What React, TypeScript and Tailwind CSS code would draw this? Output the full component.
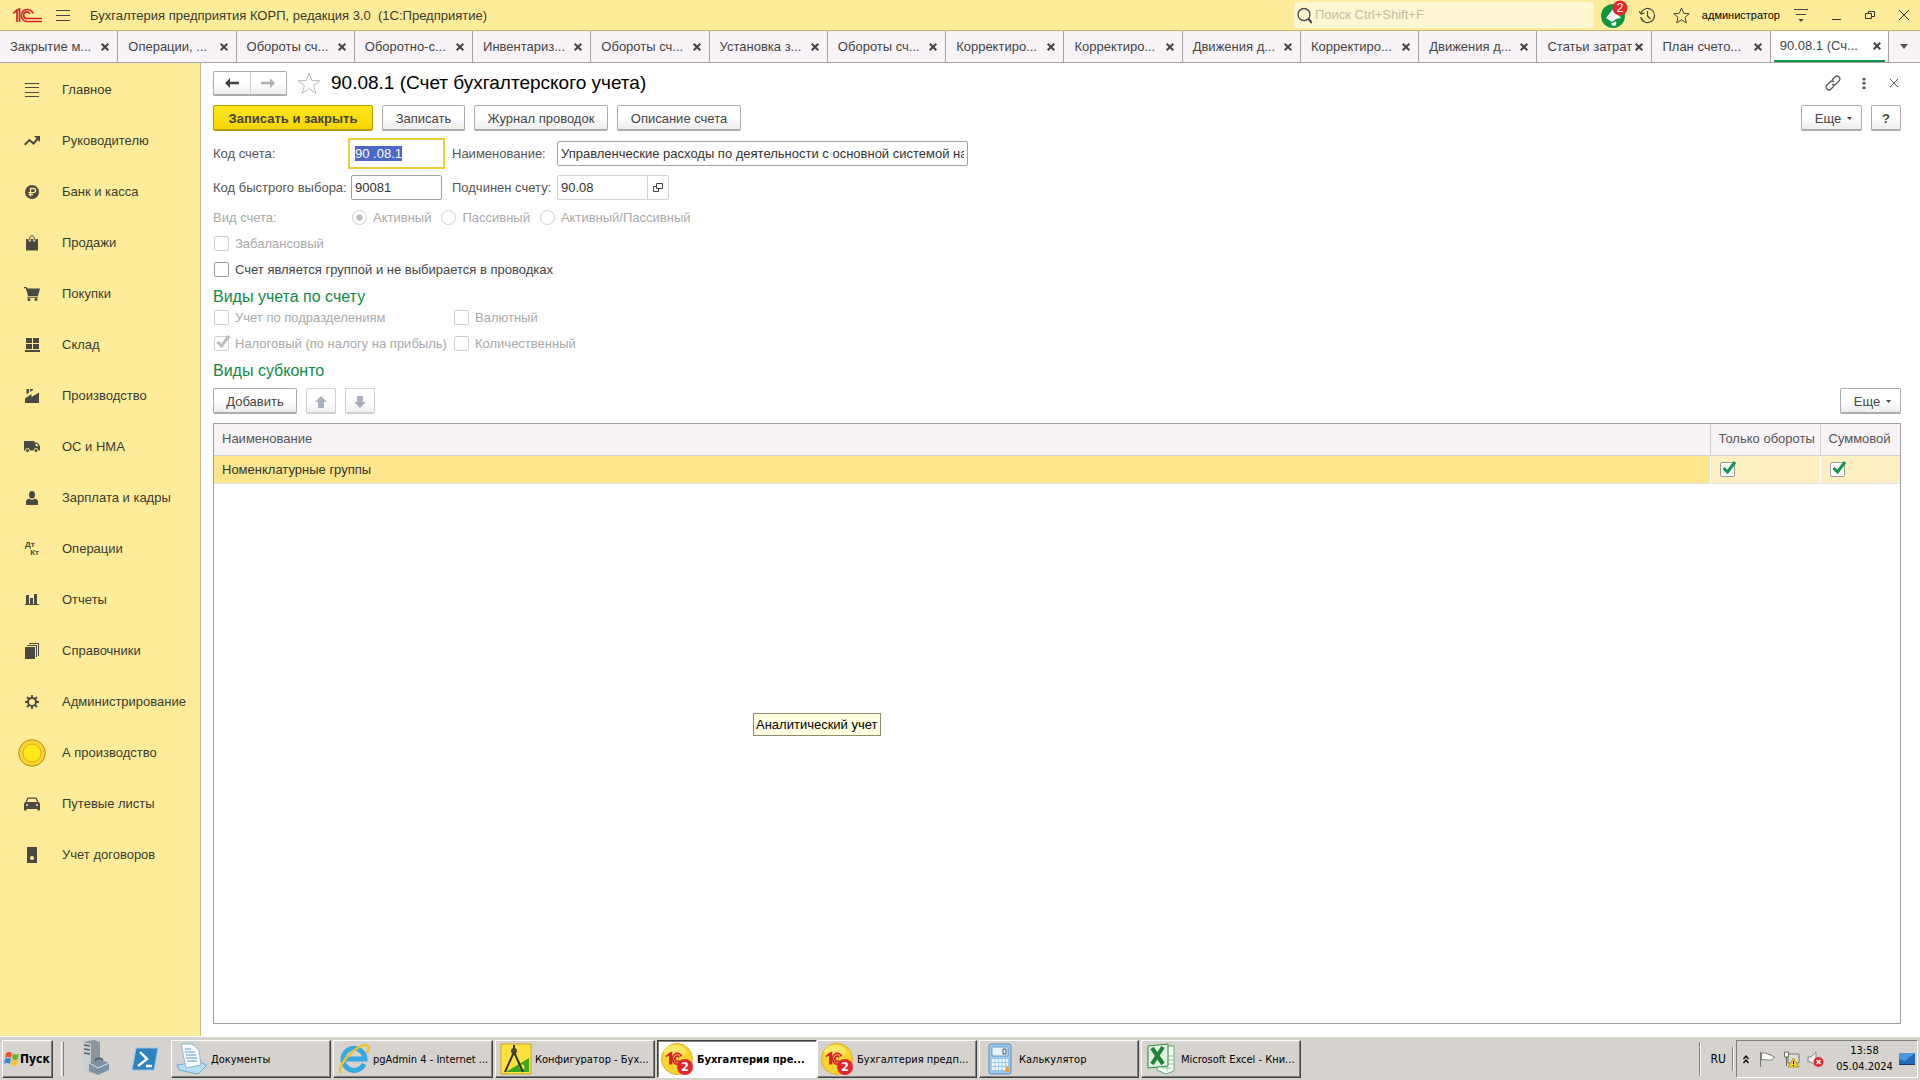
import { useEffect, useRef, type ReactNode } from "react"

const tabs = [
	"Закрытие м...",
	"Операции, ...",
	"Обороты сч...",
	"Оборотно-с...",
	"Инвентариз...",
	"Обороты сч...",
	"Установка з...",
	"Обороты сч...",
	"Корректиро...",
	"Корректиро...",
	"Движения д...",
	"Корректиро...",
	"Движения д...",
	"Статьи затрат",
	"План счето...",
	"90.08.1 (Сч...",
]

const sections: { label: string; icon: ReactNode }[] = [
	{
		label: "Главное",
		icon: (
			<svg width="14" height="14" stroke="currentColor">
				<path d="M0 .5h14M0 4.5h14M0 9.5h14M0 13.5h14" />
			</svg>
		),
	},
	{
		label: "Руководителю",
		icon: (
			<svg width="16" height="10" fill="none" stroke="currentColor" strokeWidth="2">
				<path d="M.7 8.8 5.5 4l4 3.5L14 2.5" />
				<path d="M10 0h6v6z" fill="currentColor" stroke="none" />
			</svg>
		),
	},
	{
		label: "Банк и касса",
		icon: (
			<svg width="14" height="14">
				<circle cx="7" cy="7" r="7" fill="currentColor" />
				<path d="M5.5 11.5v-8h3a2 2 0 0 1 0 4.2h-5M3.5 9.7h4.5" fill="none" stroke="#ffec9a" strokeWidth="1.3" />
			</svg>
		),
	},
	{
		label: "Продажи",
		icon: (
			<svg width="12" height="16">
				<path d="M0 4h12v11.5H0z" fill="currentColor" />
				<path d="M3.8 6.5V3.2a2.2 2.4 0 0 1 4.4 0v3.3" fill="none" stroke="#ffec9a" strokeWidth="2.4" />
				<path d="M3.8 5.5V3a2.2 2.3 0 0 1 4.4 0v2.5" fill="none" stroke="currentColor" strokeWidth="1" />
			</svg>
		),
	},
	{
		label: "Покупки",
		icon: (
			<svg width="16" height="14" fill="currentColor">
				<path d="M0 0h2.500l1 1.500H16L14 9H4L1.800 1.200H0zM3.500 9.800H14v1H3z" />
				<circle cx="5" cy="12.400" r="1.500" />
				<circle cx="12" cy="12.400" r="1.500" />
			</svg>
		),
	},
	{
		label: "Склад",
		icon: (
			<svg width="15" height="14" fill="currentColor">
				<path d="M1 0h6v5H1zM8 0h6v5H8zM1 6h6v5H1zM8 6h6v5H8zM0 12h15v2H0z" />
			</svg>
		),
	},
	{
		label: "Производство",
		icon: (
			<svg width="14" height="14" fill="currentColor">
				<path d="M0 14V9.500L6.500 5v3L14 3.500V14zM1.500 0H4v3.500L1.500 5.500zM5 0h3v1L5 3z" />
			</svg>
		),
	},
	{
		label: "ОС и НМА",
		icon: (
			<svg width="16" height="12">
				<path d="M0 0h10.500v1.500h3L16 5v4.500H0z" fill="currentColor" />
				<path d="M11.500 2.800h1.600l1.500 2.400h-3.100z" fill="#ffec9a" />
				<g fill="currentColor" stroke="#ffec9a">
					<circle cx="3.500" cy="9.500" r="2" />
					<circle cx="12" cy="9.500" r="2" />
				</g>
			</svg>
		),
	},
	{
		label: "Зарплата и кадры",
		icon: (
			<svg width="12" height="14" fill="currentColor">
				<ellipse cx="6" cy="3.700" rx="3" ry="3.700" />
				<path d="M0 14v-3q0-3 3.500-3.200Q6 9.500 8.500 7.800 12 8 12 11v3z" />
			</svg>
		),
	},
	{
		label: "Операции",
		icon: (
			<span className="flex w-[14px] flex-col text-[8px] leading-[8px] font-bold">
				<span>Дт</span>
				<span className="self-end">Кт</span>
			</span>
		),
	},
	{
		label: "Отчеты",
		icon: (
			<svg width="14" height="11" fill="currentColor">
				<path d="M1 1h3v9H1zM5 4h3v6H5zM9 0h3v10H9zM0 10h14v1H0z" />
			</svg>
		),
	},
	{
		label: "Справочники",
		icon: (
			<svg width="14" height="16" fill="currentColor">
				<path d="M0 4h10v12H0zM2 2h10v12h-1V3H2zM4 0h10v13h-1V1H4z" />
			</svg>
		),
	},
	{
		label: "Администрирование",
		icon: (
			<svg width="14" height="14" viewBox="0 0 14 14" fill="none" stroke="currentColor">
				<circle cx="7" cy="7" r="4" strokeWidth="2" />
				<path d="M7 0v2.500M7 11.500V14M0 7h2.500M11.500 7H14M2 2l2 2M10 10l2 2M2 12l2-2M10 4l2-2" strokeWidth="1.800" />
			</svg>
		),
	},
	{
		label: "А производство",
		icon: (
			<svg width="28" height="28">
				<circle cx="14" cy="14" r="13.300" fill="#fcd22e" stroke="#b38f13" />
				<circle cx="14" cy="14" r="9" fill="#ffe719" stroke="#e0a92c" />
			</svg>
		),
	},
	{
		label: "Путевые листы",
		icon: (
			<svg width="16" height="14">
				<path d="M0 6.500 1.500 5 3.500.500h9L14.500 5 16 6.500V13.500h-2.500V12h-11v1.500H0z" fill="currentColor" />
				<path d="M4.300 1.800h7.400L13.200 5H2.800z" fill="#ffec9a" />
				<circle cx="3" cy="8" r="1" fill="#ffec9a" />
				<circle cx="13" cy="8" r="1" fill="#ffec9a" />
			</svg>
		),
	},
	{
		label: "Учет договоров",
		icon: (
			<svg width="10" height="16">
				<path d="M0 0h10v16H0z" fill="currentColor" />
				<circle cx="5" cy="11" r="2" fill="#ffec9a" />
			</svg>
		),
	},
]

function LogoPaths() {
	return (
		<g fill="none" stroke="#d8232a" strokeWidth="1.700">
			<path d="M0 5.200 4 2.500V14M2.500 2.800 6.500 1v13" />
			<path d="M20 5.500A6 6 0 1 0 14.500 13.500H29" />
			<path d="M17 6A3.300 3.300 0 1 0 14.500 10.500H29" />
		</g>
	)
}

function OneCTaskIcon() {
	return (
		<svg width="33" height="33" viewBox="0 0 33 33" className="shrink-0">
			<circle cx="16" cy="16" r="15.500" fill="#f9d62c" stroke="#e0ae22" />
			<ellipse cx="14" cy="9" rx="11" ry="7" fill="#fff07a" opacity=".7" />
			<g transform="translate(5 9) scale(.78 .9)">
				<g fill="none" stroke="#d8232a" strokeWidth="2.200">
					<path d="M0 5 5 2V14M3 3l4-2v13" />
					<path d="M20 5A6 6 0 1 0 15 13.500h10M17 6a3 3 0 1 0-2 4.500h10" />
				</g>
			</g>
			<circle cx="24" cy="24" r="8" fill="#e5252b" />
			<text x="24" y="28" textAnchor="middle" fontSize="12" fontWeight="bold" fill="#fff">2</text>
		</svg>
	)
}

function Button({ children, className = "", ...rest }: { children: ReactNode; className?: string; disabled?: boolean; "aria-label"?: string }) {
	return (
		<button
			type="button"
			className={"flex h-[26px] shrink-0 items-center justify-center rounded-xs border border-b-2 pt-[2px] " + className}
			{...rest}
		>
			{children}
		</button>
	)
}

const plain = "border-[#acacac] bg-linear-to-b from-white from-50% to-[#ececec] text-[#444]"
const faded = "border-[#d0d0d0] bg-linear-to-b from-white from-50% to-[#f0f0f0] text-[#aab0be]"

function Caret() {
	return (
		<svg width="5" height="3" fill="currentColor">
			<path d="M0 0h5L2.500 3z" />
		</svg>
	)
}

function Check({ label, checked = false, disabled = false }: { label: string; checked?: boolean; disabled?: boolean }) {
	return (
		<label className={"flex h-[17px] items-center gap-[6px] pl-px whitespace-nowrap " + (disabled ? "text-[#a9a9a9]" : "text-[#444]")}>
			<Box checked={checked} disabled={disabled} />
			{label}
		</label>
	)
}

function Box({ checked, disabled, label }: { checked?: boolean; disabled?: boolean; label?: string }) {
	return (
		<span className="relative flex size-[15px] shrink-0">
			<input
				type="checkbox"
				aria-label={label}
				defaultChecked={checked}
				disabled={disabled}
				className="peer size-[15px] appearance-none rounded-xs border border-[#9a9a9a] bg-white disabled:border-[#cfcfcf]"
			/>
			<svg
				width="16"
				height="16"
				fill="none"
				strokeWidth="3"
				className="pointer-events-none absolute -top-px left-0 hidden stroke-[#0f9550] peer-checked:block peer-disabled:stroke-[#bdbdbd]"
			>
				<path d="m3.500 7 4 4L15 1" />
			</svg>
		</span>
	)
}

function Radio({ label, checked = false }: { label: string; checked?: boolean }) {
	return (
		<label className="flex items-center gap-[6px]">
			<input
				type="radio"
				name="kind"
				disabled
				defaultChecked={checked}
				className="size-[15px] appearance-none rounded-full border border-[#cfcfcf] bg-white checked:bg-radial checked:from-[#bdbdbd] checked:from-30% checked:to-white checked:to-40%"
			/>
			{label}
		</label>
	)
}

const raised = "border border-t-white border-l-white border-r-[#404040] border-b-[#404040] shadow-[inset_-1px_-1px_0_#808080]"

function Task({ title, icon, active = false }: { title: string; icon: ReactNode; active?: boolean }) {
	return (
		<button
			type="button"
			className={
				"flex h-[38px] w-[160px] items-center gap-[3px] pl-[3px] text-left " +
				(active
					? "border border-t-[#404040] border-l-[#404040] border-r-white border-b-white bg-white font-bold shadow-[inset_1px_1px_0_#808080]"
					: raised)
			}
		>
			<span className="flex w-[33px] shrink-0 justify-center">{icon}</span>
			<span className="pt-[2px] whitespace-nowrap">{title}</span>
		</button>
	)
}

function TitleBar() {
	return (
		<header className="flex h-[31px] items-center border-b border-[#c4b470] bg-[#ffec9a] text-[#3a3a30]">
			<svg width="30" height="15" className="ml-[13px] shrink-0">
				<LogoPaths />
			</svg>
			<button type="button" aria-label="Меню" className="ml-[13px]">
				<svg width="14" height="13" stroke="#444">
					<path d="M0 1.500h14M0 6.500h14M0 11.500h14" />
				</svg>
			</button>
			<h1 className="ml-5 pt-px text-[13px] whitespace-pre">Бухгалтерия предприятия КОРП, редакция 3.0  (1С:Предприятие)</h1>
			<label className="ml-auto flex h-[26px] w-[300px] items-center gap-[3px] rounded-xs bg-[#fff6d4] pl-[3px]">
				<svg width="16" height="17" fill="none" stroke="#444" strokeWidth="1.300">
					<circle cx="7" cy="7.500" r="6" />
					<path d="m11.500 12 3.500 4" strokeWidth="2" />
				</svg>
				<input aria-label="Поиск" placeholder="Поиск Ctrl+Shift+F" className="w-full bg-transparent text-[13px] outline-none placeholder:text-[#c3bda4]" />
			</label>
			<button type="button" aria-label="Уведомления" className="ml-[7px]">
				<svg width="28" height="30">
					<circle cx="12" cy="16" r="12" fill="#0f9641" />
					<path d="m5 18 7-9 8 9-5 1-4 3zM10 23.500l5-2q1 4-2 4.500-2 0-3-2.500z" fill="#fff" />
					<circle cx="19" cy="8" r="7.500" fill="#e5252b" />
					<text x="19" y="12" textAnchor="middle" fontSize="12" fill="#fff">2</text>
				</svg>
			</button>
			<button type="button" aria-label="История" className="ml-[10px]">
				<svg width="17" height="17" fill="none" stroke="#444" strokeWidth="1.200">
					<path d="M2 6a7 7 0 1 1-.3 4M8.500 4v5l3 3" />
					<path d="m0 4 2 3 3.500-1" />
				</svg>
			</button>
			<button type="button" aria-label="Избранное" className="ml-[17px]">
				<svg width="17" height="17" fill="none" stroke="#444">
					<path d="m8.500 1 2.200 5.300 5.500.4-4.200 3.600 1.300 5.500-4.800-3-4.800 3L5 10.300.8 6.700l5.500-.4z" />
				</svg>
			</button>
			<span className="ml-3 text-[11px] text-black">администратор</span>
			<button type="button" aria-label="Сервис" className="ml-[14px]">
				<svg width="14" height="14" stroke="#444">
					<path d="M0 1.500h14M2 6.500h10" />
					<path d="M4.500 11h5L7 14z" fill="#444" stroke="none" />
				</svg>
			</button>
			<button type="button" aria-label="Свернуть" className="ml-6">
				<svg width="9" height="12" stroke="#333"><path d="M0 10.500h9" /></svg>
			</button>
			<button type="button" aria-label="Развернуть" className="ml-6">
				<svg width="10" height="10" fill="none" stroke="#333">
					<path d="M.5 3.500h6v5h-6zM3.500 3.500v-2h6v5h-3" />
				</svg>
			</button>
			<button type="button" aria-label="Закрыть" className="mr-[11px] ml-6">
				<svg width="10" height="10" stroke="#333"><path d="m0 0 10 10M10 0 0 10" /></svg>
			</button>
		</header>
	)
}

function TabBar() {
	return (
		<nav className="flex h-8 border-b border-[#a5a5a5] bg-[#f7f3f7] text-[13px] text-[#444]">
			{tabs.map((tab, i) => {
				const active = i === tabs.length - 1
				const width = i === 13 ? "w-[115px] shrink-0" : "min-w-0 flex-1"
				return (
					<div key={i} className={"flex border-r border-[#a5a5a5] " + width + (active ? " bg-white" : "")}>
						<div className={"flex grow items-center justify-between " + (active ? "mx-[3px] border-b-2 border-[#0f9550] pr-1 pl-[6px]" : "pr-2 pl-[10px]")}>
							<button type="button" className="whitespace-nowrap">{tab}</button>
							<button type="button" aria-label="Закрыть вкладку">
								<svg width="8" height="8" stroke="#444" strokeWidth="2"><path d="m.7.700 6.600 6.600M7.300.700.700 7.300" /></svg>
							</button>
						</div>
					</div>
				)
			})}
			<button type="button" aria-label="Все вкладки" className="flex w-[31px] items-center justify-center">
				<svg width="8" height="5" fill="#555"><path d="M0 0h8L4 5z" /></svg>
			</button>
		</nav>
	)
}

function AccountForm() {
	const code = useRef<HTMLInputElement>(null)

	useEffect(() => {
		code.current?.focus()
		code.current?.select()
	}, [])

	const field = "h-[25px] min-w-0 rounded-xs border border-[#a0a0a0] bg-white px-[3px] text-[13px] text-[#333]"

	return (
		<main className="flex min-w-0 grow flex-col bg-white pt-2 pr-[19px] pb-3 pl-3">
			<div className="flex h-6 items-center">
				<div className="flex h-[25px] w-[74px] rounded-xs border border-b-2 border-[#acacac] bg-linear-to-b from-white from-50% to-[#ececec]">
					<button type="button" aria-label="Назад" className="flex flex-1 items-center justify-center border-r border-[#d5d5d5]">
						<svg width="14" height="10" fill="#444"><path d="M0 5 5 0v3.800h9v2.400H5V10z" /></svg>
					</button>
					<button type="button" aria-label="Вперед" className="flex flex-1 items-center justify-center">
						<svg width="14" height="10" fill="#b0b0b0"><path d="M14 5 9 0v3.800H0v2.400h9V10z" /></svg>
					</button>
				</div>
				<button type="button" aria-label="В избранное" className="ml-[10px]">
					<svg width="24" height="22" fill="none" stroke="#b8bcc2">
						<path d="m12 1 2.800 7.500 8.200.2-6.400 4.900 2.300 7.700-6.900-4.500-6.900 4.500 2.300-7.700L1 8.700l8.200-.2z" />
					</svg>
				</button>
				<h2 className="ml-[10px] text-[19px] text-black">90.08.1 (Счет бухгалтерского учета)</h2>
				<div className="mr-[3px] ml-auto flex items-center text-[#555]">
					<button type="button" aria-label="Ссылка">
						<svg width="16" height="16" fill="none" stroke="currentColor" strokeWidth="1.200">
							<path d="m7 5 3-3q2-2 4 0t0 4l-3 3q-2 2-4 0M9 11l-3 3q-2 2-4 0t0-4l3-3q2-2 4 0" />
						</svg>
					</button>
					<button type="button" aria-label="Действия" className="ml-[21px]">
						<svg width="4" height="11" fill="currentColor"><path d="M.5 0h3v2.500h-3zM.5 4h3v2.500h-3zM.5 8.500h3V11h-3z" /></svg>
					</button>
					<button type="button" aria-label="Закрыть" className="ml-6">
						<svg width="8" height="8" stroke="currentColor"><path d="m0 0 8 8M8 0 0 8" /></svg>
					</button>
				</div>
			</div>

			<div className="mt-[10px] flex gap-[9px]">
				<Button className="w-[160px] border-[#b39b00] bg-linear-to-b from-[#ffe81a] to-[#f5d500] font-bold text-[#444]">Записать и закрыть</Button>
				<Button className={"w-[83px] " + plain}>Записать</Button>
				<Button className={"w-[134px] " + plain}>Журнал проводок</Button>
				<Button className={"w-[124px] " + plain}>Описание счета</Button>
				<Button className={"ml-auto w-[61px] gap-[6px] pl-1 " + plain}>Еще <Caret /></Button>
				<Button className={"w-[30px] font-bold " + plain}>?</Button>
			</div>

			<div className="mt-[10px] grid grid-cols-[138px_91px_115px_411px] items-center gap-y-[9px] text-[#555]">
				<label htmlFor="code">Код счета:</label>
				<input
					id="code"
					ref={code}
					defaultValue="90 .08.1"
					className="h-[25px] min-w-0 bg-white px-1 text-[13px] text-[#333] outline-2 outline-offset-1 outline-[#f3cd36] selection:bg-[#4c68c6] selection:text-white"
				/>
				<label htmlFor="name" className="pl-[10px]">Наименование:</label>
				<input id="name" defaultValue="Управленческие расходы по деятельности с основной системой налогообложения" className={field} />
				<label htmlFor="quick">Код быстрого выбора:</label>
				<input id="quick" defaultValue="90081" className={field} />
				<label htmlFor="parent" className="pl-[10px] whitespace-nowrap">Подчинен счету:</label>
				<div className="flex h-[25px] w-[112px] rounded-xs border border-[#d3d3d3]">
					<input id="parent" readOnly defaultValue="90.08" className="min-w-0 flex-1 border-r border-[#d3d3d3] px-[3px] text-[13px] text-[#333] outline-none" />
					<button type="button" aria-label="Открыть" className="flex w-5 items-center justify-center">
						<svg width="10" height="10" fill="none" stroke="#444">
							<path d="M3.500.500h6v5h-6zM3.500 3.500h-3v5h5v-3" />
						</svg>
					</button>
				</div>
			</div>

			<fieldset className="mt-2 flex h-[17px] items-center text-[#a9a9a9]">
				<legend className="float-left w-[139px]">Вид счета:</legend>
				<div className="flex items-center gap-[10px]">
					<Radio label="Активный" checked />
					<Radio label="Пассивный" />
					<Radio label="Активный/Пассивный" />
				</div>
			</fieldset>
			<div className="mt-[10px] flex flex-col gap-[9px]">
				<Check label="Забалансовый" disabled />
				<Check label="Счет является группой и не выбирается в проводках" />
			</div>

			<h3 className="mt-[9px] text-[16px] leading-5 text-[#0f8a4b]">Виды учета по счету</h3>
			<div className="mt-[2px] grid grid-cols-[240px_auto] gap-y-[9px]">
				<Check label="Учет по подразделениям" disabled />
				<Check label="Валютный" disabled />
				<Check label="Налоговый (по налогу на прибыль)" checked disabled />
				<Check label="Количественный" disabled />
			</div>

			<h3 className="mt-[9px] text-[16px] leading-5 text-[#0f8a4b]">Виды субконто</h3>
			<div className="mt-[7px] flex gap-[9px]">
				<Button className={"w-[84px] " + plain}>Добавить</Button>
				<Button className={"w-[30px] " + faded} disabled aria-label="Вверх">
					<svg width="12" height="12" fill="currentColor"><path d="m6 0 6 6H9v6H3V6H0z" /></svg>
				</Button>
				<Button className={"w-[30px] " + faded} disabled aria-label="Вниз">
					<svg width="12" height="12" fill="currentColor"><path d="M6 12 0 6h3V0h6v6h3z" /></svg>
				</Button>
				<Button className={"ml-auto w-[61px] gap-[6px] pl-1 " + plain}>Еще <Caret /></Button>
			</div>

			<div className="relative mt-[9px] grow border border-[#a0a0a0]">
				<table className="w-full table-fixed text-left">
					<thead>
						<tr className="h-[31px] border-b border-[#d0d0d0] bg-[#f7f3f7] text-[#555]">
							<th className="border-r border-[#d0d0d0] pb-[2px] pl-2 font-normal">Наименование</th>
							<th className="w-[110px] border-r border-[#d0d0d0] pb-[2px] pl-2 font-normal whitespace-nowrap">Только обороты</th>
							<th className="w-[80px] pb-[2px] pl-2 font-normal">Суммовой</th>
						</tr>
					</thead>
					<tbody>
						<tr className="h-7 border-b border-[#e4e4e4] bg-[#fff0c3] text-[#333]">
							<td className="border-r border-white bg-[#ffe68c] pt-[2px] pl-2">Номенклатурные группы</td>
							<td className="border-r border-white pl-[9px]"><Box checked label="Только обороты" /></td>
							<td className="pl-[9px]"><Box checked label="Суммовой" /></td>
						</tr>
					</tbody>
				</table>
				<div role="tooltip" className="absolute top-[289px] left-[539px] border border-[#8c8c6a] bg-[#ffffe1] px-[2px] text-[13px] leading-[21px] text-black">
					Аналитический учет
				</div>
			</div>
		</main>
	)
}

function TaskBar() {
	return (
		<footer className="flex h-11 items-center border-t border-white bg-[#d6d3ce] pt-px pl-[2px] font-[Tahoma,'DejaVu_Sans_Condensed','Liberation_Sans',sans-serif] text-[11px] text-black">
			<button type="button" className={"flex h-[38px] w-[51px] items-center text-[12px] font-bold " + raised}>
				<svg width="17" height="16" className="shrink-0">
					<path d="M3 2q3-2 6 0L8 7Q5 5 2 7z" fill="#e8562a" />
					<path d="M10 2.500q3 2 6 0L15 8q-3 2-6 0z" fill="#6cb52d" />
					<path d="M2 8q3-2 6 0l-1 5q-3-2-6 0z" fill="#3f8ade" />
					<path d="M9 8.500q3 2 6 0L14 14q-3 2-6 0z" fill="#f8c12c" />
				</svg>
				Пуск
			</button>
			<div className="ml-2 h-[34px] w-[3px] border-r border-l border-r-[#808080] border-l-white" />
			<button type="button" aria-label="Диспетчер сервера" className="ml-[17px]">
				<svg width="30" height="38">
					<path d="m2 2 11-2 6 2v24l-9 7-8-5z" fill="#8c959b" />
					<path d="m2 2 8 2v29l-8-5z" fill="#c8d0d5" />
					<path d="M3 5l6 1M3 9l6 1M3 13l6 1" stroke="#56616a" strokeWidth="1.500" />
					<path d="m8 23 11-4 9 4v7l-11 5-9-4z" fill="#7d93a3" />
					<path d="m8 23 9 5 11-5" fill="none" stroke="#d4e0e8" />
					<path d="M14 21q3-5 8-1" fill="none" stroke="#55656f" strokeWidth="2" />
				</svg>
			</button>
			<button type="button" aria-label="PowerShell" className="ml-[20px]">
				<svg width="28" height="24">
					<path d="M5 1h22l-4 22H1z" fill="#2d83bf" stroke="#9ac7e8" />
					<path d="m9 5 7 7-9 7M15 19h6" fill="none" stroke="#fff" strokeWidth="2.400" />
				</svg>
			</button>
			<div className="ml-[12px] flex gap-[2px]">
				<Task
					title="Документы"
					icon={
						<svg width="32" height="32">
							<path d="m1 22 22-3 8 3-9 9-19-4z" fill="#b5def2" stroke="#6cadcf" />
							<path d="M5 1h11l7 6 2 15-15 3z" fill="#f7fbff" stroke="#93b4cc" />
							<path d="M9 6h6M9 9h10M10 12h10M10 15h11M11 18h10" stroke="#5a94c8" />
						</svg>
					}
				/>
				<Task
					title="pgAdmin 4 - Internet ..."
					icon={
						<svg width="32" height="32" fill="none">
							<path d="M26 21A11 11 0 1 1 27 16H8" stroke="#36a8e2" strokeWidth="5" />
							<path d="M4 30Q-2 27 10 13 24-1 30 3q2 2-1 7" stroke="#f3bf2d" strokeWidth="2.500" />
						</svg>
					}
				/>
				<Task
					title="Конфигуратор - Бух..."
					icon={
						<svg width="32" height="32">
							<path d="M1 1h30v30H1z" fill="#ffe13c" stroke="#c9a51c" />
							<path d="m6 29 23-14v14z" fill="#3aa51f" />
							<circle cx="22" cy="24" r="2.500" fill="#ffe13c" />
							<path d="M14 9 5 29M14 9l9 20M14 2v5" stroke="#333" strokeWidth="2" />
							<circle cx="14" cy="8" r="3" fill="#444" />
						</svg>
					}
				/>
				<div className="flex">
					<Task title="Бухгалтерия пре..." icon={<OneCTaskIcon />} active />
					<Task title="Бухгалтерия предп..." icon={<OneCTaskIcon />} />
				</div>
				<Task
					title="Калькулятор"
					icon={
						<svg width="24" height="32">
							<rect x="1" y="1" width="22" height="30" rx="2" fill="#9cc8ea" stroke="#5b92c4" />
							<path d="M4 4h16v9H4z" fill="#e9f4fb" stroke="#6d9cc2" />
							<path d="M15 6h3v5h-3z" fill="none" stroke="#36587a" />
							<path d="M4 17.500h16M4 21.500h16M4 25.500h16" stroke="#fff" strokeWidth="2.500" strokeDasharray="2.500 1" />
							<path d="M18 24h3v5h-3z" fill="#e99a3c" />
						</svg>
					}
				/>
				<Task
					title="Microsoft Excel - Кни..."
					icon={
						<svg width="30" height="32">
							<path d="M12 3h15v25l-8 3-9-4z" fill="#f5fbf5" stroke="#6da675" />
							<path d="M14 13h12M14 17h12M14 21h12M14 25h10M20 8v20" stroke="#8abf90" />
							<path d="m1 3 20-2v22L1 25z" fill="#dff0df" stroke="#2d8a3d" />
							<path d="m5 5 11 16M16 4 5 21" stroke="#1c8434" strokeWidth="4" />
						</svg>
					}
				/>
			</div>

			<div className="ml-auto h-[34px] w-[2px] border-r border-l border-r-white border-l-[#808080]" />
			<span className="ml-[10px] text-[12px]">RU</span>
			<div className="ml-[6px] h-6 w-[2px] border-r border-l border-r-white border-l-[#808080]" />
			<div className="mr-[2px] ml-[2px] flex h-[38px] w-[182px] items-center border border-t-[#808080] border-r-white border-b-white border-l-[#808080] pl-[6px]">
				<svg width="6" height="9" fill="none" stroke="#000" strokeWidth="1.300"><path d="m.5 4 2.500-3 2.500 3M.5 8 3 5l2.500 3" /></svg>
				<svg width="17" height="17" className="ml-[10px]" fill="#fff" stroke="#777">
					<path d="M1.500 1v15" />
					<path d="M2.500 2q3-1 6 1 4 1 7 3-2 4-7 3-3-1-6 0z" />
				</svg>
				<svg width="17" height="17" className="ml-[7px]">
					<path d="M5 3h11v9H5z" fill="#ddd" stroke="#777" />
					<path d="M1.500 1h4v5h-4zM3.500 6v9" fill="#fff" stroke="#666" />
					<path d="m10.500 7 5.500 9H5z" fill="#f8d12e" stroke="#b8930f" />
					<path d="M10.500 10v3M10.500 14v1" stroke="#000" />
				</svg>
				<svg width="17" height="17" className="ml-[7px]">
					<path d="M1 6h3l5-5v14L4 11H1z" fill="#eee" stroke="#888" />
					<circle cx="11.500" cy="11" r="5" fill="#e02b2b" />
					<path d="m9.500 9 4 4M13.500 9l-4 4" stroke="#fff" strokeWidth="1.500" />
				</svg>
				<time className="flex grow flex-col items-center pl-[6px] leading-4">
					<span>13:58</span>
					<span>05.04.2024</span>
				</time>
				<svg width="16" height="13" className="mr-[2px]">
					<path d="M0 0h16v11H0z" fill="#2569b5" />
					<path d="M0 0h16L6 8 0 6z" fill="#4d97dc" />
					<path d="M0 11h16v1H0z" fill="#123c70" />
				</svg>
			</div>
		</footer>
	)
}

export default function App() {
	return (
		<div className="flex min-h-screen w-full flex-col bg-white font-['Liberation_Sans',Arial,sans-serif] text-[13px]">
			<TitleBar />
			<TabBar />
			<div className="flex grow">
				<nav className="w-[201px] shrink-0 border-r border-[#c9bb83] bg-[#ffec9a] pt-px text-[#4a4a42]">
					{sections.map((section) => (
						<a key={section.label} href="#" className="flex h-[51px] items-center gap-[16px] pl-[18px]">
							<span className="flex w-7 justify-center">{section.icon}</span>
							<span className="whitespace-nowrap text-[#3a3a30]">{section.label}</span>
						</a>
					))}
				</nav>
				<AccountForm />
			</div>
			<TaskBar />
		</div>
	)
}
